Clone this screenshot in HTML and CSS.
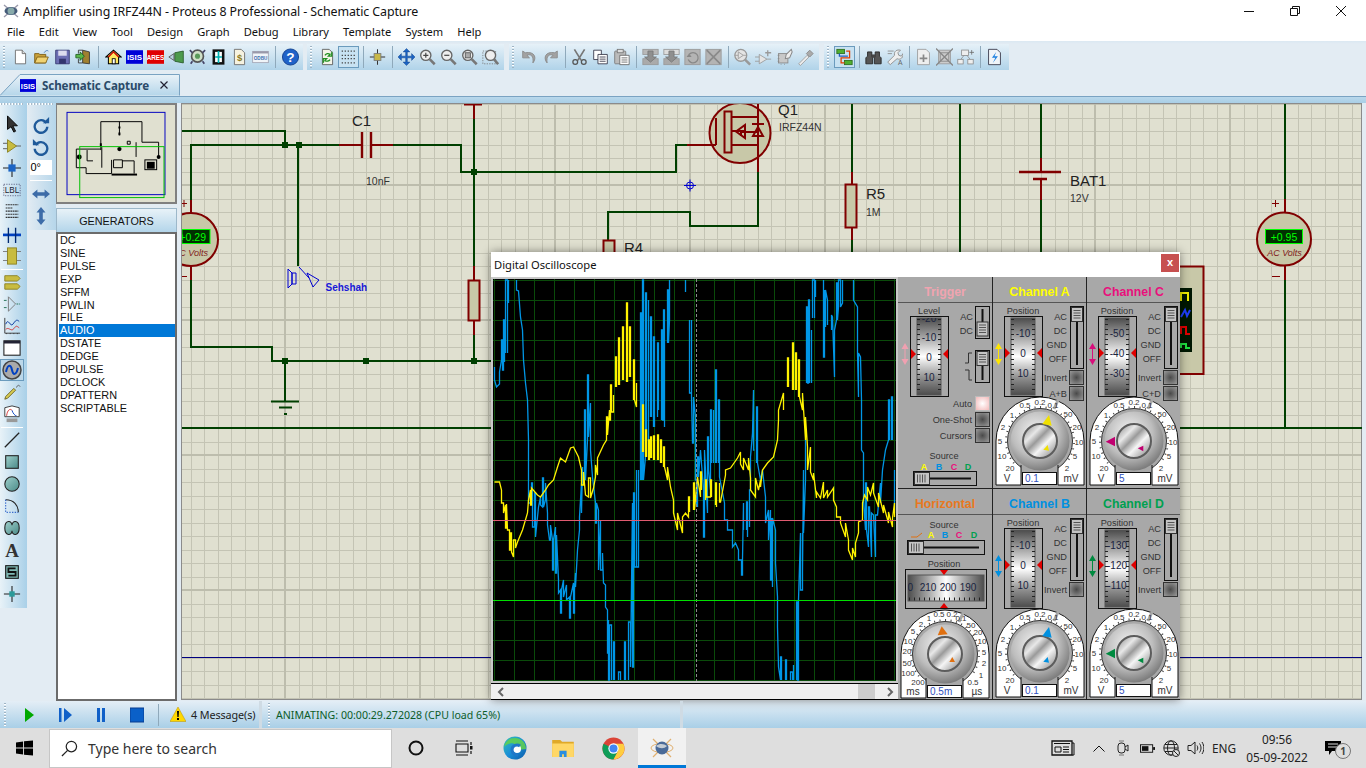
FILE: index.html
```html
<!DOCTYPE html>
<html lang="en">
<head>
<meta charset="utf-8">
<title>Amplifier using IRFZ44N - Proteus 8 Professional - Schematic Capture</title>
<link rel="stylesheet" href="styles.css">
</head>
<body>
<svg class="defs" width="0" height="0" aria-hidden="true">
<defs>
<linearGradient id="wheel" x1="0" y1="0" x2="0" y2="1"><stop offset="0" stop-color="#4c4c4c"/><stop offset=".22" stop-color="#9a9a9a"/><stop offset=".5" stop-color="#fff"/><stop offset=".78" stop-color="#8e8e8e"/><stop offset="1" stop-color="#4c4c4c"/></linearGradient>
<linearGradient id="hwheel" x1="0" y1="0" x2="1" y2="0"><stop offset="0" stop-color="#4c4c4c"/><stop offset=".25" stop-color="#a0a0a0"/><stop offset=".5" stop-color="#fff"/><stop offset=".75" stop-color="#a0a0a0"/><stop offset="1" stop-color="#4c4c4c"/></linearGradient>
<radialGradient id="knob" cx=".42" cy=".36" r=".72"><stop offset="0" stop-color="#f4f4f4"/><stop offset=".55" stop-color="#bdbdbd"/><stop offset="1" stop-color="#6a6a6a"/></radialGradient>
<linearGradient id="cap" x1="0" y1="0" x2="1" y2="1"><stop offset="0" stop-color="#7d7d7d"/><stop offset=".3" stop-color="#e8e8e8"/><stop offset=".45" stop-color="#9a9a9a"/><stop offset=".62" stop-color="#f5f5f5"/><stop offset="1" stop-color="#777"/></linearGradient>
<radialGradient id="btn" cx=".5" cy=".5" r=".7"><stop offset="0" stop-color="#4a4a4a"/><stop offset="1" stop-color="#a0a0a0"/></radialGradient>
<radialGradient id="btnp" cx=".5" cy=".5" r=".7"><stop offset="0" stop-color="#fff"/><stop offset="1" stop-color="#f2b4b4"/></radialGradient>
<linearGradient id="teal" x1="0" y1="0" x2="1" y2="1"><stop offset="0" stop-color="#9fd0cc"/><stop offset="1" stop-color="#4a8a88"/></linearGradient>
<linearGradient id="edge" x1="0" y1="0" x2="1" y2="1"><stop offset="0" stop-color="#35c1b0"/><stop offset=".5" stop-color="#1a8fd8"/><stop offset="1" stop-color="#0c5aa8"/></linearGradient>
<clipPath id="wclip"><rect x="19" y="15" width="24" height="77"/></clipPath>
<clipPath id="hclip"><rect x="10" y="60" width="76" height="26"/></clipPath>

<g id="thumb"><rect x="0" y="0" width="11" height="14" fill="#c4c4c4" stroke="#333"/><path d="M2 3h7M2 5.500h7M2 8h7M2 10.500h7" stroke="#555" stroke-width="1"/></g>
<g id="hthumb"><rect x="0" y="0" width="15" height="12" fill="#c4c4c4" stroke="#333"/><path d="M3 2v8M5.500 2v8M8 2v8M10.500 2v8" stroke="#555" stroke-width="1"/></g>
<g id="pb"><rect x=".5" y=".5" width="14" height="14" fill="url(#btn)" stroke="#333"/></g>
<g id="pbp"><rect x=".5" y=".5" width="14" height="14" fill="url(#btnp)" stroke="#bbb"/></g>

<g id="chstatic">
<text class="sc-l" x="30" y="10.500" text-anchor="middle">Position</text>
<rect x="11.500" y="13.500" width="38" height="80" fill="#a8a8a8" stroke="#111"/>
<rect x="18" y="15" width="24" height="77" fill="url(#wheel)" stroke="#555"/>
<path d="M19.500 16V91M40.500 16V91" stroke="#222" stroke-width="3" stroke-dasharray="1 4"/>
<polygon points="12,45 17,50 12,55" fill="#e00000"/><polygon points="49,45 44,50 49,55" fill="#e00000"/>
<text class="sc-l" x="74" y="17" text-anchor="end">AC</text><text class="sc-l" x="74" y="31" text-anchor="end">DC</text><text class="sc-l" x="74" y="45" text-anchor="end">GND</text><text class="sc-l" x="74" y="59" text-anchor="end">OFF</text>
<rect x="77.500" y="3.500" width="13" height="62" fill="#a8a8a8" stroke="#111"/><path d="M84 8V62" stroke="#111" stroke-width="2"/>
<use href="#thumb" x="78.500" y="4.500"/>
<text class="sc-l" x="74" y="77.500" text-anchor="end">Invert</text><use href="#pb" x="76" y="67"/>
</g>

<g id="dialbody">
<path d="M3 182V138A44 44 0 0 1 91 138V182Z" fill="#fff" stroke="#111"/>
<circle cx="47" cy="138" r="32.500" fill="#a8a8a8" stroke="#333"/>
<path d="M21 160A34 34 0 1 1 73 160" fill="none" stroke="#444" stroke-width="2" stroke-dasharray="1 4.500"/>
<path d="M66 95L61 106" stroke="#a8a8a8" stroke-width="3"/>
<rect x="28" y="160" width="37" height="23" fill="#a8a8a8"/>
<path d="M28 182V162M65 182V162" stroke="#111"/>
<circle cx="47" cy="138" r="29.500" fill="url(#knob)"/>
<circle cx="47" cy="138" r="17" fill="url(#cap)" stroke="#5c5c5c" stroke-width="2"/>
</g>

<g id="vdial"><use href="#dialbody"/>
<text class="sc-s" x="32" y="105">0.5</text><text class="sc-s" x="47" y="102">0.2</text><text class="sc-s" x="60" y="105">0.1</text><text class="sc-s" x="19" y="115">1</text><text class="sc-s" x="10" y="127">2</text><text class="sc-s" x="7" y="141">5</text><text class="sc-s" x="9" y="156">10</text><text class="sc-s" x="17" y="168">20</text><text class="sc-s" x="75" y="114">50</text><text class="sc-s" x="84" y="127">20</text><text class="sc-s" x="86" y="142">10</text><text class="sc-s" x="82" y="156">5</text><text class="sc-s" x="74" y="168">2</text>
<text class="sc-u" x="14" y="179">V</text><text class="sc-u" x="78" y="179">mV</text>
</g>
<g id="val"><rect x="29.500" y="169.500" width="34" height="12" fill="#fff" stroke="#111"/></g>

<symbol id="i-new" viewBox="0 0 20 20"><path d="M4 2h8l4 4v12H4z" fill="#fff" stroke="#666"/><path d="M12 2v4h4" fill="#ddd" stroke="#666"/></symbol>
<symbol id="i-open" viewBox="0 0 20 20"><path d="M2 6h5l1 1h7v10H2z" fill="#c9a13a" stroke="#7a5a10"/><path d="M2 17l3-7h13l-3 7z" fill="#f0d272" stroke="#7a5a10"/><path d="M13 5c2-3 4-3 5-2" fill="none" stroke="#3a6fb0"/></symbol>
<symbol id="i-save" viewBox="0 0 20 20"><path d="M2 2h16v16H2z" fill="#6d6fb4" stroke="#33356e"/><rect x="5" y="2.500" width="10" height="6" fill="#dcdcee"/><rect x="6" y="12" width="8" height="6" fill="#33356e"/></symbol>
<symbol id="i-exit" viewBox="0 0 20 20"><path d="M9 2l8 2v14l-8-1z" fill="#a08030" stroke="#333"/><path d="M9 2H4v4M4 12v5h5" fill="none" stroke="#333"/><path d="M1 7h5V4l5 5-5 5v-3H1z" fill="#58b848" stroke="#1c5c1c"/></symbol>
<symbol id="i-home" viewBox="0 0 20 20"><path d="M10 2l9 8h-3v8H4v-8H1z" fill="#ffe860" stroke="#000" stroke-width="1.200"/><path d="M4 10l6-6 6 6" fill="none" stroke="#c00" stroke-width="1.500"/><rect x="8.500" y="12" width="3.500" height="6" fill="#fff" stroke="#000"/></symbol>
<symbol id="i-isis" viewBox="0 0 20 16"><rect width="20" height="16" fill="#0000d8"/><text x="10" y="12" text-anchor="middle" fill="#fff" font-family="Liberation Sans" font-weight="700" font-size="9.500">ISIS</text></symbol>
<symbol id="i-ares" viewBox="0 0 20 16"><rect width="20" height="16" fill="#e00000"/><text x="10" y="12" text-anchor="middle" fill="#fff" font-family="Liberation Sans" font-weight="700" font-size="7.500">ARES</text></symbol>
<symbol id="i-3d" viewBox="0 0 20 20"><path d="M8 5l10-2v14l-10-2z" fill="#4c9a4c" stroke="#285828"/><path d="M1 10l6-4v8z" fill="#b8d0e0" stroke="#555"/></symbol>
<symbol id="i-gear" viewBox="0 0 20 20"><circle cx="10" cy="9" r="7" fill="#d0e0c8" stroke="#555" stroke-width="2"/><circle cx="10" cy="9" r="3" fill="#5a9a5a"/><path d="M1 2l3 3M19 2l-3 3M4 15l-2 3M16 15l2 3" stroke="#446" stroke-width="2"/></symbol>
<symbol id="i-chip" viewBox="0 0 20 20"><path d="M3 1h14v18H3z" fill="#111"/><rect x="6" y="4" width="8" height="12" fill="#fff"/><path d="M10 3v14M6 10h8" stroke="#00b0b0" stroke-width="2"/></symbol>
<symbol id="i-bill" viewBox="0 0 20 20"><path d="M4 1h8l4 4v14H4z" fill="#f6f2e0" stroke="#666"/><text x="10" y="15" text-anchor="middle" fill="#8a7a20" font-family="Liberation Sans" font-weight="700" font-size="11">$</text></symbol>
<symbol id="i-odb" viewBox="0 0 24 20"><rect x="1" y="2" width="22" height="16" fill="#f0f4f8" stroke="#99a"/><rect x="1" y="2" width="22" height="3" fill="#99a"/><text x="12" y="14" text-anchor="middle" fill="#3a6fb0" font-family="Liberation Sans" font-weight="700" font-size="6.500">ODBU</text></symbol>
<symbol id="i-help" viewBox="0 0 20 20"><circle cx="10" cy="10" r="9.500" fill="#1f62c8" stroke="#0c3a86"/><text x="10" y="16" text-anchor="middle" fill="#fff" font-family="Liberation Sans" font-weight="700" font-size="16">?</text></symbol>
<symbol id="i-refresh" viewBox="0 0 20 20"><path d="M4 1h8l4 4v14H4z" fill="#f4f4e8" stroke="#555"/><path d="M7 8a4 4 0 0 1 6-1l-2 2h4V5l-1 1M13 13a4 4 0 0 1-6 1l2-2H5v4l1-1" fill="none" stroke="#209020" stroke-width="1.500"/></symbol>
<symbol id="i-grid" viewBox="0 0 20 20"><path d="M2 3h16M2 8h16M2 12h16M2 17h16" stroke="#444" stroke-width="1.500" stroke-dasharray="1.500 2"/></symbol>
<symbol id="i-origin" viewBox="0 0 20 20"><path d="M10 1v18M1 10h18" stroke="#333" stroke-width="1.200"/><rect x="6" y="6" width="8" height="8" fill="#c8b848" stroke="#777"/></symbol>
<symbol id="i-pan" viewBox="0 0 20 20"><path d="M10 0l4 4h-3v5h5V6l4 4-4 4v-3h-5v5h3l-4 4-4-4h3v-5H4v3l-4-4 4-4v3h5V4H6z" fill="#1c64c4" stroke="#0a3a80" stroke-width=".5"/></symbol>
<symbol id="i-zin" viewBox="0 0 20 20"><circle cx="8" cy="8" r="6" fill="#eee" stroke="#666" stroke-width="1.600"/><path d="M5 8h6M8 5v6" stroke="#444" stroke-width="1.400"/><path d="M12.500 12.500l6 6" stroke="#777" stroke-width="3"/></symbol>
<symbol id="i-zout" viewBox="0 0 20 20"><circle cx="8" cy="8" r="6" fill="#eee" stroke="#666" stroke-width="1.600"/><path d="M5 8h6" stroke="#444" stroke-width="1.400"/><path d="M12.500 12.500l6 6" stroke="#777" stroke-width="3"/></symbol>
<symbol id="i-zfit" viewBox="0 0 20 20"><circle cx="8" cy="8" r="6" fill="#eee" stroke="#666" stroke-width="1.600"/><rect x="5" y="5" width="6" height="6" fill="#aaa" stroke="#555"/><path d="M12.500 12.500l6 6" stroke="#777" stroke-width="3"/></symbol>
<symbol id="i-zarea" viewBox="0 0 20 20"><rect x="1" y="3" width="15" height="15" fill="none" stroke="#777" stroke-dasharray="1.500 1.500"/><circle cx="10" cy="8" r="6" fill="#eee" stroke="#666" stroke-width="1.600"/><path d="M14 12.500l5 6" stroke="#777" stroke-width="3"/></symbol>
<symbol id="i-undo" viewBox="0 0 20 20"><path d="M2 3v8h8l-3-3c5-2 8 1 7 9 5-6 2-14-9-12z" fill="#a2a2a2" stroke="#888"/></symbol>
<symbol id="i-redo" viewBox="0 0 20 20"><path d="M18 3v8h-8l3-3c-5-2-8 1-7 9-5-6-2-14 9-12z" fill="#a2a2a2" stroke="#888"/></symbol>
<symbol id="i-cut" viewBox="0 0 20 20"><path d="M4 1l8 13M16 1L8 14" stroke="#777" stroke-width="2"/><circle cx="5" cy="16" r="2.800" fill="none" stroke="#555" stroke-width="1.500"/><circle cx="15" cy="16" r="2.800" fill="none" stroke="#555" stroke-width="1.500"/></symbol>
<symbol id="i-copy" viewBox="0 0 20 20"><path d="M2 2h9v11H2z" fill="#fff" stroke="#334"/><path d="M7 7h11v11H7z" fill="#fff" stroke="#334"/><path d="M9 10h7M9 12.500h7M9 15h7" stroke="#334"/></symbol>
<symbol id="i-paste" viewBox="0 0 20 20"><rect x="2" y="3" width="13" height="15" fill="#bbb" stroke="#777" rx="1"/><rect x="5" y="1" width="7" height="4" fill="#ddd" stroke="#777"/><path d="M8 8h11v11H8z" fill="#fff" stroke="#666"/><path d="M10 11h7M10 13.500h7M10 16h7" stroke="#666"/></symbol>
<symbol id="i-bcopy" viewBox="0 0 20 20"><rect x="1" y="1" width="18" height="6" fill="#b8b8b8" stroke="#999"/><rect x="1" y="12" width="18" height="7" fill="#aaa" stroke="#999"/><path d="M7 3h6v7h4l-7 6-7-6h4z" fill="#8f8f8f" stroke="#777"/></symbol>
<symbol id="i-bmove" viewBox="0 0 20 20"><rect x="1" y="1" width="18" height="6" fill="#ddd" stroke="#999"/><rect x="1" y="12" width="18" height="7" fill="#aaa" stroke="#999"/><path d="M7 3h6v7h4l-7 6-7-6h4z" fill="#8f8f8f" stroke="#777"/></symbol>
<symbol id="i-brot" viewBox="0 0 20 20"><rect x="1" y="1" width="18" height="18" fill="#b4b4b4" stroke="#999"/><path d="M6 7a6 6 0 1 1-1 6" fill="none" stroke="#888" stroke-width="1.500"/><path d="M3 10h6l-3-4z" fill="#888"/></symbol>
<symbol id="i-bdel" viewBox="0 0 20 20"><rect x="1" y="1" width="18" height="18" fill="#b4b4b4" stroke="#999"/><path d="M2 2l16 16M18 2L2 18" stroke="#8a8a8a" stroke-width="2"/></symbol>
<symbol id="i-pick" viewBox="0 0 20 20"><circle cx="8" cy="8" r="7" fill="#e4e4e4" stroke="#999" stroke-width="1.500"/><path d="M5 4v8l6-4zM1 8h4M11 8h4" fill="none" stroke="#999"/><path d="M13 13l6 6" stroke="#999" stroke-width="3"/></symbol>
<symbol id="i-make" viewBox="0 0 20 20"><path d="M5 7v11l9-5.500zM0 10h5M0 15h5M14 12.500h5" fill="#e4e4e4" stroke="#999"/><path d="M15 2v7M12 5h7" stroke="#999" stroke-width="1.500"/></symbol>
<symbol id="i-pack" viewBox="0 0 20 20"><rect x="3" y="6" width="11" height="11" fill="#c8c8c8" stroke="#888"/><path d="M2 8h2M2 12h2M2 15h2M6 18v1M10 18v1" stroke="#888"/><path d="M18 1l-6 6-1 5 5-1 3-7z" fill="#eee" stroke="#888" stroke-width="1.200"/></symbol>
<symbol id="i-hammer" viewBox="0 0 20 20"><path d="M2 18l10-10 2 2-10 10z" fill="#eee" stroke="#999"/><path d="M11 6l4-4 4 4-4 4z" fill="#aaa" stroke="#888"/></symbol>
<symbol id="i-net" viewBox="0 0 20 20"><rect x="1" y="1" width="9" height="5" fill="#50b030" stroke="#2c6c1c"/><rect x="10" y="14" width="9" height="5" fill="#50b030" stroke="#2c6c1c"/><path d="M12 3h4v8H6v6h4" fill="none" stroke="#e04000" stroke-width="1.500"/><path d="M4 6v3h10" fill="none" stroke="#2060c0" stroke-width="1.500"/></symbol>
<symbol id="i-find" viewBox="0 0 20 20"><path d="M3 4h5v5l1 2v7H1v-7l2-2zM12 4h5v5l2 2v7h-8v-7l1-2z" fill="#555" stroke="#222"/><rect x="8" y="7" width="4" height="4" fill="#444"/></symbol>
<symbol id="i-wire" viewBox="0 0 20 20"><path d="M2 3h7M2 6h5" stroke="#888"/><path d="M2 16l8-8c-1-5 3-7 7-6l-3 3 1 3 3 1 2-3c1 4-3 8-7 6l-8 7z" fill="#eee" stroke="#888"/><text x="14" y="19" font-family="Liberation Sans" font-size="8" fill="#666">A</text></symbol>
<symbol id="i-nsheet" viewBox="0 0 20 20"><path d="M3 1h10l4 4v14H3z" fill="#eee" stroke="#999"/><path d="M10 7v9M5.500 11.500h9" stroke="#888" stroke-width="2"/></symbol>
<symbol id="i-dsheet" viewBox="0 0 20 20"><path d="M3 2h14v16H3z" fill="#ccc" stroke="#999"/><path d="M5 5h10v10H5z" fill="none" stroke="#888"/><path d="M0 0l20 20M20 0L0 20" stroke="#888" stroke-width="1.600"/></symbol>
<symbol id="i-parent" viewBox="0 0 22 20"><rect x="6" y="1" width="9" height="7" fill="#eee" stroke="#888"/><rect x="1" y="13" width="7" height="6" fill="#eee" stroke="#888"/><rect x="14" y="13" width="7" height="6" fill="#eee" stroke="#888"/><path d="M9 8l-4 5M13 8l4 5" stroke="#888"/><path d="M19 1v6M16 4h6" stroke="#666"/></symbol>
<symbol id="i-report" viewBox="0 0 20 20"><path d="M3 1h10l4 4v14H3z" fill="#f0f4f8" stroke="#334"/><path d="M12 4l-5 7h4l-3 6 6-8h-4z" fill="#1c80e0"/></symbol>

<symbol id="t-sel" viewBox="0 0 20 20"><path d="M5 1v15l4-3 3 6 2-1-3-6h5z" fill="#333" stroke="#000"/></symbol>
<symbol id="t-comp" viewBox="0 0 20 20"><path d="M0 7h5M0 13h5M14 10h6" stroke="#555"/><path d="M5 3v14l10-7z" fill="#c8bc40" stroke="#8a8020"/></symbol>
<symbol id="t-junc" viewBox="0 0 20 20"><path d="M10 0v20M0 10h20" stroke="#222" stroke-width="1.200"/><rect x="6" y="6" width="8" height="8" fill="#1c64c4"/></symbol>
<symbol id="t-lbl" viewBox="0 0 22 20"><rect x="1" y="3" width="20" height="14" fill="none" stroke="#557" stroke-dasharray="1.500 1.500"/><text x="11" y="14" text-anchor="middle" font-family="Liberation Sans" font-size="10" fill="#223">LBL</text></symbol>
<symbol id="t-text" viewBox="0 0 20 20"><path d="M3 2h14M3 5.500h8M3 9h14M3 12.500h14M3 16h14" stroke="#333" stroke-dasharray="2 .6" stroke-width="1.200"/></symbol>
<symbol id="t-bus" viewBox="0 0 20 20"><path d="M0 11h20" stroke="#0040c0" stroke-width="3"/><path d="M6 3v17M14 3v17" stroke="#002870" stroke-width="1.500"/></symbol>
<symbol id="t-sub" viewBox="0 0 20 20"><path d="M0 5h6M0 15h6M14 5h6M14 15h6" stroke="#777"/><rect x="5" y="1" width="10" height="18" fill="#c8bc40" stroke="#8a8020"/></symbol>
<symbol id="t-term" viewBox="0 0 20 20"><path d="M2 3h14l3 3-3 3H2z" fill="#c8bc40" stroke="#8a8020"/><path d="M2 11h14l3 3-3 3H2z" transform="translate(0 1)" fill="#c8bc40" stroke="#8a8020"/></symbol>
<symbol id="t-port" viewBox="0 0 20 20"><path d="M6 2v16l8-8z" fill="none" stroke="#777"/><path d="M1 6h3M1 14h3" stroke="#1a6a4a"/><path d="M15 10h4" stroke="#1a6a4a" stroke-dasharray="2 1"/></symbol>
<symbol id="t-graph" viewBox="0 0 20 20"><path d="M2 1v17h17" fill="none" stroke="#333"/><path d="M3 8c3-8 5 4 8 0s4-6 7-3" fill="none" stroke="#00309a"/><path d="M3 14c3-4 6 3 9-1s3-3 6-1" fill="none" stroke="#d03030"/><path d="M4 18v1M8 18v1M12 18v1M16 18v1" stroke="#333"/></symbol>
<symbol id="t-tape" viewBox="0 0 20 20"><rect x="1" y="2" width="18" height="16" fill="#fff" stroke="#222" stroke-width="1.200"/><rect x="1" y="2" width="18" height="3" fill="#223"/></symbol>
<symbol id="t-gen" viewBox="0 0 20 20"><circle cx="10" cy="10" r="9" fill="#aaa" stroke="#444" stroke-width="1.500"/><path d="M4 12c2-9 5-7 6-2s4 6 6-2" fill="none" stroke="#0040c0" stroke-width="2"/></symbol>
<symbol id="t-probe" viewBox="0 0 20 20"><path d="M2 18l3-1 9-9-2-2-9 9z" fill="#d8cc50" stroke="#6a6020"/><path d="M15 5c1-3 3-3 4-1" fill="none" stroke="#555"/></symbol>
<symbol id="t-inst" viewBox="0 0 20 20"><path d="M2 3l8-2 8 2v10H2z" fill="#fff" stroke="#333"/><path d="M4 12c1-8 5-8 6-6" fill="none" stroke="#d03030"/><path d="M10 6c1 3 3 6 5 6" fill="none" stroke="#0040c0"/><path d="M4 15h12v4H4z" fill="#999"/></symbol>
<symbol id="t-line" viewBox="0 0 20 20"><path d="M2 18L18 2" stroke="#222" stroke-width="1.400"/></symbol>
<symbol id="t-rect" viewBox="0 0 20 20"><rect x="3" y="3" width="14" height="14" fill="url(#teal)" stroke="#222" stroke-width="1.200"/></symbol>
<symbol id="t-circ" viewBox="0 0 20 20"><circle cx="10" cy="10" r="8" fill="url(#teal)" stroke="#222" stroke-width="1.200"/></symbol>
<symbol id="t-arc" viewBox="0 0 20 20"><path d="M3 3c9 0 14 6 14 14" fill="none" stroke="#222" stroke-width="1.200"/><path d="M3 3v14h14" fill="none" stroke="#0040c0" stroke-dasharray="1.500 1.500"/></symbol>
<symbol id="t-path" viewBox="0 0 20 20"><path d="M2 10c0-9 8-9 8-3 0-6 8-6 8 3s-8 9-8 3c0 6-8 6-8-3z" fill="url(#teal)" stroke="#222" stroke-width="1.200"/></symbol>
<symbol id="t-a" viewBox="0 0 20 20"><text x="10" y="18" text-anchor="middle" font-family="Liberation Serif" font-weight="700" font-size="21" fill="#333">A</text></symbol>
<symbol id="t-s" viewBox="0 0 20 20"><rect x="3" y="3" width="14" height="14" fill="#7fb8b4" stroke="#111" stroke-width="1.200"/><path d="M14 6H6v4h8v4H6" fill="none" stroke="#111" stroke-width="2"/></symbol>
<symbol id="t-mark" viewBox="0 0 20 20"><path d="M10 1v18M1 10h18" stroke="#222" stroke-width="1.200"/><rect x="7" y="7" width="6" height="6" fill="#2a9a9a"/></symbol>
<symbol id="t-redo" viewBox="0 0 20 20"><path d="M16 8a7 7 0 1 0 1 4" fill="none" stroke="#1f5a9a" stroke-width="2.600"/><path d="M12 8h7V1z" fill="#1f5a9a"/></symbol>
<symbol id="t-undo" viewBox="0 0 20 20"><path d="M4 8a7 7 0 1 1-1 4" fill="none" stroke="#1f5a9a" stroke-width="2.600"/><path d="M8 8H1V1z" fill="#1f5a9a"/></symbol>
<symbol id="t-mh" viewBox="0 0 20 20"><path d="M0 10l6-5v3h8V5l6 5-6 5v-3H6v3z" fill="#3d6ca8"/></symbol>
<symbol id="t-mv" viewBox="0 0 20 20"><path d="M10 0l5 6h-3v8h3l-5 6-5-6h3V6H5z" fill="#3d6ca8"/></symbol>
</defs>
</svg>

<header class="titlebar">
<svg class="appicon" viewBox="0 0 16 16"><path d="M1 2l14 12M15 2L1 14" stroke="#99a" stroke-width="1.400"/><ellipse cx="8" cy="8" rx="6.500" ry="4" fill="#445a78"/><circle cx="8" cy="8" r="3.500" fill="#8aa"/></svg>
<span class="titletext">Amplifier using IRFZ44N - Proteus 8 Professional - Schematic Capture</span>
<span class="winbtns">
<span class="wb"><svg viewBox="0 0 10 10" width="10" height="10"><path d="M0 5.500h10" stroke="#111"/></svg></span>
<span class="wb"><svg viewBox="0 0 10 10" width="10" height="10"><path d="M.5 2.500h7v7h-7zM2.500 2.500v-2h7v7h-2" fill="none" stroke="#111"/></svg></span>
<span class="wb"><svg viewBox="0 0 10 10" width="10" height="10"><path d="M0 0l10 10M10 0L0 10" stroke="#111"/></svg></span>
</span>
</header>

<nav class="menubar"><span>File</span><span>Edit</span><span>View</span><span>Tool</span><span>Design</span><span>Graph</span><span>Debug</span><span>Library</span><span>Template</span><span>System</span><span>Help</span></nav>

<div class="toolbar">
<div class="tg g1"><i class="grip"></i>
<svg class="ic"><use href="#i-new"/></svg><svg class="ic"><use href="#i-open"/></svg><svg class="ic"><use href="#i-save"/></svg><svg class="ic"><use href="#i-exit"/></svg><i class="sep"></i>
<svg class="ic"><use href="#i-home"/></svg><svg class="ic"><use href="#i-isis"/></svg><svg class="ic"><use href="#i-ares"/></svg><svg class="ic"><use href="#i-3d"/></svg><svg class="ic"><use href="#i-gear"/></svg><svg class="ic"><use href="#i-chip"/></svg><svg class="ic"><use href="#i-bill"/></svg><svg class="ic"><use href="#i-odb"/></svg><i class="sep"></i>
<svg class="ic"><use href="#i-help"/></svg></div>
<div class="tg g2"><i class="grip"></i>
<svg class="ic"><use href="#i-refresh"/></svg><svg class="ic on"><use href="#i-grid"/></svg><i class="sep"></i>
<svg class="ic"><use href="#i-origin"/></svg><i class="sep"></i>
<svg class="ic"><use href="#i-pan"/></svg><svg class="ic"><use href="#i-zin"/></svg><svg class="ic"><use href="#i-zout"/></svg><svg class="ic"><use href="#i-zfit"/></svg><svg class="ic"><use href="#i-zarea"/></svg></div>
<div class="tg g3"><i class="grip"></i>
<svg class="ic"><use href="#i-undo"/></svg><svg class="ic"><use href="#i-redo"/></svg><i class="sep"></i>
<svg class="ic"><use href="#i-cut"/></svg><svg class="ic"><use href="#i-copy"/></svg><svg class="ic"><use href="#i-paste"/></svg><i class="sep"></i>
<svg class="ic"><use href="#i-bcopy"/></svg><svg class="ic"><use href="#i-bmove"/></svg><svg class="ic"><use href="#i-brot"/></svg><svg class="ic"><use href="#i-bdel"/></svg><i class="sep"></i>
<svg class="ic"><use href="#i-pick"/></svg><svg class="ic"><use href="#i-make"/></svg><svg class="ic"><use href="#i-pack"/></svg><svg class="ic"><use href="#i-hammer"/></svg></div>
<div class="tg g4"><i class="grip"></i>
<svg class="ic on"><use href="#i-net"/></svg><i class="sep"></i>
<svg class="ic"><use href="#i-find"/></svg><svg class="ic"><use href="#i-wire"/></svg><i class="sep"></i>
<svg class="ic"><use href="#i-nsheet"/></svg><svg class="ic"><use href="#i-dsheet"/></svg><svg class="ic"><use href="#i-parent"/></svg><i class="sep"></i>
<svg class="ic"><use href="#i-report"/></svg></div>
</div>

<div class="tabrow">
<div class="tab">
<svg class="tabshape" viewBox="0 0 180 26" preserveAspectRatio="none"><defs><linearGradient id="tabg" x1="0" y1="0" x2="0" y2="1"><stop offset="0" stop-color="#e9f2f8"/><stop offset="1" stop-color="#b5d6ea"/></linearGradient></defs><path d="M0 25.500L20 4.500H179.500V25.500" fill="url(#tabg)" stroke="#7aa3c2"/></svg>
<svg class="tabicon"><use href="#i-isis"/></svg><span class="tablabel">Schematic Capture</span>
<svg class="tabx" viewBox="0 0 8 8"><path d="M.5.500l7 7M7.500.500l-7 7" stroke="#223" stroke-width="1.200"/></svg>
</div>
</div>
<div class="tabstrip"></div>

<main class="workspace">
<div class="tools">
<i class="gripx"></i>
<svg class="tic"><use href="#t-sel"/></svg><svg class="tic"><use href="#t-comp"/></svg><svg class="tic"><use href="#t-junc"/></svg><svg class="tic"><use href="#t-lbl"/></svg><svg class="tic"><use href="#t-text"/></svg><svg class="tic"><use href="#t-bus"/></svg><svg class="tic"><use href="#t-sub"/></svg>
<i class="hr"></i>
<svg class="tic"><use href="#t-term"/></svg><svg class="tic"><use href="#t-port"/></svg><svg class="tic"><use href="#t-graph"/></svg><svg class="tic"><use href="#t-tape"/></svg><svg class="tic on"><use href="#t-gen"/></svg><svg class="tic"><use href="#t-probe"/></svg><svg class="tic"><use href="#t-inst"/></svg>
<i class="hr"></i>
<svg class="tic"><use href="#t-line"/></svg><svg class="tic"><use href="#t-rect"/></svg><svg class="tic"><use href="#t-circ"/></svg><svg class="tic"><use href="#t-arc"/></svg><svg class="tic"><use href="#t-path"/></svg><svg class="tic"><use href="#t-a"/></svg><svg class="tic"><use href="#t-s"/></svg><svg class="tic"><use href="#t-mark"/></svg>
</div>
<div class="tools2">
<i class="gripx"></i>
<svg class="tic"><use href="#t-redo"/></svg><svg class="tic"><use href="#t-undo"/></svg>
<span class="angle">0°</span><i class="hr"></i>
<svg class="tic"><use href="#t-mh"/></svg><svg class="tic"><use href="#t-mv"/></svg>
</div>
<aside class="side">
<div class="overview">
<svg viewBox="57 104 119 99" class="ov">
<rect x="66.500" y="111.500" width="100" height="84" fill="none" stroke="#0000c0"/>
<g fill="none" stroke="#000" stroke-width="1">
<path d="M101 150V121H143V142H160V158M120 121V135M76 149H101M76 149V168H86V174H112V160M102 147V168M87 150V161H93M114 160H123V168H114ZM123 161H135V174M137 142V157"/>
<path d="M112 175H138" stroke-width="2"/><path d="M131 141h-3v3h3z"/><path d="M120 126v2M120 132v3M101 143v3" stroke-width="2"/>
<rect x="146" y="160" width="12" height="10"/>
</g>
<rect x="148" y="162" width="8" height="7"/>
<circle cx="79" cy="157" r="2.500"/><circle cx="120" cy="149" r="2.200"/><circle cx="160" cy="157" r="2"/>
<rect x="79.500" y="146.500" width="86" height="52" fill="none" stroke="#00c000"/>
</svg>
</div>
<div class="genhead">GENERATORS</div>
<ul class="genlist"><li>DC</li><li>SINE</li><li>PULSE</li><li>EXP</li><li>SFFM</li><li>PWLIN</li><li>FILE</li><li class="sel">AUDIO</li><li>DSTATE</li><li>DEDGE</li><li>DPULSE</li><li>DCLOCK</li><li>DPATTERN</li><li>SCRIPTABLE</li></ul>
</aside>

<section class="canvas">
<svg class="schem" viewBox="182 104 1180 595">
<g class="wire">
<path d="M182 131H285V145"/><path d="M191 200V145H340"/><path d="M393 145H461V172H676V145H687"/>
<path d="M474 119V266M474 335V361"/><path d="M191 280V347H272V361H491"/><path d="M298 145V266"/>
<path d="M285 361V401"/><path d="M271 401.500H299M279 407.500H292M284 414H287"/>
<path d="M182 428H491M1180 428H1362"/><path d="M758 172V226H690V212H608V240"/>
<path d="M852 104V172M852 240V252"/><path d="M960 104V252"/><path d="M1041 104V158M1041 200V252"/><path d="M1285 104V199M1285 280V428"/>
</g>
<g class="node"><rect x="282" y="142" width="6" height="6"/><rect x="296" y="142" width="6" height="6"/><rect x="471" y="169" width="6" height="6"/><rect x="282" y="358" width="6" height="6"/><rect x="363" y="358" width="6" height="6"/><rect x="471" y="358" width="6" height="6"/></g>
<path class="navy" d="M182 657.500H491M1180 657.500H1362"/>
<g class="part">
<path d="M464 104.500H482M474 104V119M474 266V280M474 320V335"/><rect x="468.500" y="280.500" width="11" height="40" class="body"/>
<path d="M339 145H361M372 145H393"/><path class="thick" d="M362 132V158M371 132V158"/>
<ellipse cx="191" cy="239.500" rx="27" ry="26.500" class="body"/><path d="M191 200V213M191 266V280"/>
<path d="M608 240V253"/>
<rect x="603.500" y="240.500" width="11" height="30" class="body"/>
<ellipse cx="740" cy="133" rx="30.500" ry="30" class="body"/>
<path d="M687 145H716M716 118V145"/><rect x="724.500" y="111.500" width="7" height="41" fill="none"/>
<path d="M731 117H758M731 145H758M758 104V172M741 136V132H758M731 131H745M745 125V138L736 131.500Z"/>
<path d="M752 124H764M753 136H763L758 127Z"/>
<path d="M852 172V185M852 227V240"/><rect x="845.500" y="184.500" width="11" height="43" class="body"/>
<path d="M1041 158V172M1041 179V200"/><path class="thick" d="M1019 172H1061M1033 179H1047"/>
<ellipse cx="1284" cy="239" rx="27" ry="26.500" class="body"/><path d="M1285 199V212M1285 266V280"/>
<path class="thin" d="M1272 203.500H1279M1275.500 200V207M1272 276.500H1280M181 203.500H187M184 200V207M181 276.500H187"/>
</g>
<rect x="1180" y="267" width="23" height="107" fill="#c8c8a8"/>
<path d="M1180 266.500H1203.500V374H1180" fill="none" stroke="#800000" stroke-width="2"/>
<rect x="1180" y="288" width="12" height="64" fill="#001800"/>
<path d="M1181 301V293H1188V301" fill="none" stroke="#f0f000" stroke-width="2"/><path d="M1181 317L1185 310L1187 316L1190 310" fill="none" stroke="#2040ff" stroke-width="2"/><path d="M1181 334V327H1186V334H1190" fill="none" stroke="#e00000" stroke-width="2"/><path d="M1181 348V344H1186V348H1190" fill="none" stroke="#20e040" stroke-width="2"/>
<rect x="182" y="229.500" width="28" height="14" fill="#003000" stroke="#00ff00"/><text class="disp" x="206" y="240.500" text-anchor="end">+0.29</text>
<rect x="1265.500" y="229.500" width="37" height="14" fill="#003000" stroke="#00ff00"/><text class="disp" x="1284" y="240.500" text-anchor="middle">+0.95</text>
<text class="volts" x="208" y="256" text-anchor="end">AC Volts</text><text class="volts" x="1284.500" y="256" text-anchor="middle">AC Volts</text>
<text class="ref" x="352" y="126">C1</text><text class="val" x="366" y="185">10nF</text>
<text class="ref" x="778" y="115">Q1</text><text class="val" x="779" y="131">IRFZ44N</text>
<text class="ref" x="866" y="199">R5</text><text class="val" x="866" y="216">1M</text>
<text class="ref" x="1070" y="186">BAT1</text><text class="val" x="1070" y="202">12V</text>
<text class="ref" x="624" y="253">R4</text>
<g class="probe"><path d="M288 269L292 273V284L288 288ZM292 273H296V284H292ZM307 273L319 280L313 287ZM299 267L309 278"/><text x="325.500" y="291">Sehshah</text></g>
<g class="cross"><circle cx="690" cy="185.500" r="3.500"/><path d="M684 185.500H696M690 179.500V191.500"/></g>
</svg>

<div class="scopewin">
<div class="scopetitle"><span>Digital Oscilloscope</span><span class="scopeclose">x</span></div>
<div class="scopebody">
<div class="scopeleft">
<svg class="screen" viewBox="493 279 403 402">
<rect x="493" y="279" width="403" height="402" fill="#000"/>
<path class="grid" d="M514.500 279V681M534.500 279V681M554.500 279V681M574.500 279V681M594.500 279V681M614.500 279V681M634.500 279V681M654.500 279V681M674.500 279V681M694.500 279V681M714.500 279V681M734.500 279V681M754.500 279V681M774.500 279V681M794.500 279V681M814.500 279V681M834.500 279V681M854.500 279V681M874.500 279V681M894.500 279V681M493 280.500H896M493 300.500H896M493 320.500H896M493 340.500H896M493 360.500H896M493 380.500H896M493 400.500H896M493 420.500H896M493 440.500H896M493 460.500H896M493 480.500H896M493 500.500H896M493 520.500H896M493 540.500H896M493 560.500H896M493 580.500H896M493 600.500H896M493 620.500H896M493 640.500H896M493 660.500H896M493 680.500H896M494.500 279V681"/>
<path class="blue" d="M494 367V380L496 387L499 384V372L501 360V340H502V370H503V320H504V362M505 353V280H507V353M508 280V303M516 280V290L518 291L520 317L522 330L523 360L525 383L527 400L528 440V503H531V483H532V527H534V493H535V537L538 507L540 497V505L542 507V478H543V507L545 500V483L547 513V525L549 540H550V525L552 540V570H553V540L555 527V573H556V535L558 580V593L560 590V613H561V590L563 580V597L566 585V600L569 597V618H570V597L573 583V613H574V590L575 573V587L577 550L579 530V517L581 483V513L582 467V480H584V410H585V480L587 440V375H588V437L590 403V450L592 477L595 503V523H596V503L598 510V570L600 520V570H602V553L603 583L605 585V607L607 610V653H608V620V680H609V625H611V680M613 680V642H614V680M618 680V672H620V680M624 680V642H625V680M628 680V622H630V667L632 503V667H633V493H634V567H636V470V567H638V470V488M640 480V313H641V480M642 480V280H643V480L645 457V293H646V457M648 440V300M650 417V317H651V417M653 427V337H654V427M657 417V343H658V410M661 420V330H662V420H663V310H664V427M667 343V290H668V343L669 320V280M685 280V292M689 320V393H691V320V397L692 443H693V397L695 417V480H696V507M697 507V457H698V477L700 450L703 490V537H704V450L707 513V437H708V470L710 490V410H711V463M713 463V410M715 463V370H716V463M718 463V400H719V477L724 503V520L727 520V530L732 530V547L735 543L738 550V560L741 560V575H742V560L743 503V530M746 530V502H747V537M749 527V490H750V457L752 433L753 390V450H754M756 463V407H757V463L760 480L762 470L765 497V523L768 510V540L770 510V580H771V518L772 587V518L775 530V563L777 597V627L778 667L780 680V657H781V680M785 680V660H786V680M790 680V672H792V680M793 680V665M796 680V602H797V680H798V600L800 533V590H802V533V573L803 470V533L805 480V440M806 383V307H807V383H808V300H809V383M811 383V330M812 318V280H814V318M815 297V280M823 280V357H824V290M825 327V290L827 300V325M831 330V315L832 317L834 377V330L836 320V283H837V320L838 307V280H840V307L842 303V280M853 280V300L857 307V353L858 397V353L860 357L861 400V450L863 453V500L865 530V483H866V530L868 547V507H869L871 557V513L873 515L875 557V515L877 515L880 483V503L882 470L885 450L888 440V400H889V440M891 440V397H892V440M894 513V470"/>
<path class="yellow" d="M494 482H499L501 490V503H503V513L505 505V528H506V504L507 530H509V550H510V533H511V552L513 557V540H515V548L517 542L522 530L527 513L528 500L530 490V505H531V488L537 495L540 497L545 490L548 485L553 480L557 467L560 458L565 462L570 448L573 447L578 457L581 470V485H583V472L585 495L588 497V478H590V498L593 488L595 477V465L597 475V458L603 445L606 440V417H607V435L609 410V420H610V385H611V412H613V395M615 387V357H616V387M618 385V338H619V385M622 380V327H623V380M626 382V303H627V382M629 377V327H630V377M633 400V360H634V400L636 407V383M642 452V405H643V452M645 457V430H646V457M648 460V440H649V460M650 458V437H651V458M653 460V436H654V460M657 460V435H658V460M660 463V440H661V463M663 467V447H664V467L667 480V467L670 487L673 500V513L677 530V513L682 533V517L685 513L688 517V497H689V512M693 510V483H694V510L697 477L700 497V472H701V490M705 500V480H706V497L710 497V480H711V497M715 505V483H716V507M719 483V502H720L725 475V470L730 468L737 458L740 452V464L743 470V458L748 470V458L750 478V490L755 497V478L758 490L760 480V487L762 470L767 463L773 457L777 440L778 420V410L783 393V410M787 387V358H788V387M792 390V343H793V390M795 390V353H796V390M798 397V360H799V397L802 410V393L805 440V417L807 447V470L810 447V472L813 480V473L816 498V492L820 498L823 482V498L827 490V497L833 488V500L836 507V517L840 517V523L845 537V523L848 540V550L852 560V548L855 557V543L858 533V522L862 520V503L864 495L867 500V487L870 495L873 483V493L878 507V493L883 513V505L888 523V512L892 527V518L894 503V517"/>
<path class="cursor" d="M696.500 279V681"/>
<path class="redline" d="M493 520.500H896"/><path class="greenline" d="M493 600.500H896"/>
</svg>
<div class="scopescroll"><svg class="sa" viewBox="0 0 8 10"><path d="M6 1L2 5l4 4" fill="none" stroke="#666" stroke-width="2"/></svg><i class="sthumb"></i><svg class="sa" viewBox="0 0 8 10"><path d="M2 1l4 4-4 4" fill="none" stroke="#666" stroke-width="2"/></svg></div>
</div>
<div class="knobs">

<div class="pn"><div class="ph c-tr">Trigger</div>
<svg class="pb" viewBox="0 0 94 184">
<text class="sc-l" x="31" y="10.500" text-anchor="middle">Level</text>
<rect x="12.500" y="13.500" width="38" height="80" fill="#a8a8a8" stroke="#111"/><rect x="19" y="15" width="24" height="77" fill="url(#wheel)" stroke="#555"/>
<path d="M20.500 16V91M41.500 16V91" stroke="#222" stroke-width="3" stroke-dasharray="1 4"/>
<text class="sc-w" x="31" y="18.500" text-anchor="middle" clip-path="url(#wclip)">-20</text><text class="sc-w" x="31" y="37.500" text-anchor="middle">-10</text><text class="sc-w" x="31" y="57.500" text-anchor="middle">0</text><text class="sc-w" x="31" y="77.500" text-anchor="middle">10</text>
<polygon points="13,46 18,51 13,56" fill="#e00000"/><polygon points="50,46 45,51 50,56" fill="#e00000"/>
<path d="M7 40L10.500 46H3.500ZM7 62L10.500 56H3.500Z" fill="#f0a0b0"/><path d="M7 46V56" stroke="#f0a0b0"/>
<text class="sc-l" x="75" y="17" text-anchor="end">AC</text><text class="sc-l" x="75" y="31" text-anchor="end">DC</text>
<rect x="77.500" y="3.500" width="14" height="32" fill="#a8a8a8" stroke="#111"/><path d="M84.500 6V32" stroke="#111" stroke-width="2"/><use href="#thumb" x="79" y="19"/>
<rect x="77.500" y="47.500" width="14" height="32" fill="#a8a8a8" stroke="#111"/><path d="M84.500 50V77" stroke="#111" stroke-width="2"/><use href="#thumb" x="79" y="48.500"/>
<path d="M67 60H70.500V50H74M67 67H71V77H74" fill="none" stroke="#333"/>
<text class="sc-l" x="74" y="103.500" text-anchor="end">Auto</text><use href="#pbp" x="77" y="93"/>
<text class="sc-l" x="74" y="119.500" text-anchor="end">One-Shot</text><use href="#pb" x="77" y="109"/>
<text class="sc-l" x="74" y="135.500" text-anchor="end">Cursors</text><use href="#pb" x="77" y="125"/>
<text class="sc-l" x="46" y="155.500" text-anchor="middle">Source</text>
<text class="sc-b f-a" x="26" y="166.500" text-anchor="middle">A</text><text class="sc-b f-b" x="41" y="166.500" text-anchor="middle">B</text><text class="sc-b f-c" x="56" y="166.500" text-anchor="middle">C</text><text class="sc-b f-d" x="70" y="166.500" text-anchor="middle">D</text>
<rect x="15.500" y="168.500" width="63" height="14" fill="#a8a8a8" stroke="#111"/><path d="M20 175.500H73" stroke="#111" stroke-width="2"/><use href="#hthumb" x="16.500" y="169.500"/>
</svg></div>

<div class="pn"><div class="ph c-a">Channel A</div>
<svg class="pb" viewBox="0 0 93 184"><use href="#chstatic"/>
<text class="sc-w" x="30" y="33.500" text-anchor="middle">-10</text><text class="sc-w" x="30" y="53.500" text-anchor="middle">0</text><text class="sc-w" x="30" y="73.500" text-anchor="middle">10</text>
<path d="M5.500 40L9 46H2ZM5.500 62L9 56H2Z" fill="#ffe600"/><path d="M5.500 46V56" stroke="#ffe600"/>
<text class="sc-l" x="74" y="93.500" text-anchor="end">A+B</text><use href="#pb" x="76" y="83"/>
<use href="#vdial"/><use href="#val"/><text class="sc-v" x="32" y="179">0.1</text>
<polygon points="49.300,121 58.700,122.700 56,112" fill="#f0e000"/><polygon points="50.300,146.700 56,147.700 54.700,142" fill="#f0e000"/>
</svg></div>

<div class="pn"><div class="ph c-c">Channel C</div>
<svg class="pb" viewBox="0 0 93 184"><use href="#chstatic"/>
<text class="sc-w" x="30" y="33.500" text-anchor="middle">-50</text><text class="sc-w" x="30" y="53.500" text-anchor="middle">-40</text><text class="sc-w" x="30" y="73.500" text-anchor="middle">-30</text>
<path d="M5.500 40L9 46H2ZM5.500 62L9 56H2Z" fill="#d8107c"/><path d="M5.500 46V56" stroke="#d8107c"/>
<text class="sc-l" x="74" y="93.500" text-anchor="end">C+D</text><use href="#pb" x="76" y="83"/>
<use href="#vdial"/><use href="#val"/><text class="sc-v" x="32" y="179">5</text>
<polygon points="18.700,138.700 28,133.700 28,143.300" fill="#c00070"/><polygon points="50.700,145.300 56.300,142.700 56.300,148.300" fill="#c00070"/>
</svg></div>

<div class="pn"><div class="ph c-h">Horizontal</div>
<svg class="pb" viewBox="0 0 94 184">
<text class="sc-l" x="46" y="13" text-anchor="middle">Source</text>
<path d="M13 22H19L24 18" fill="none" stroke="#e07010"/>
<text class="sc-b f-a" x="33" y="22.500" text-anchor="middle">A</text><text class="sc-b f-b" x="47" y="22.500" text-anchor="middle">B</text><text class="sc-b f-c" x="61" y="22.500" text-anchor="middle">C</text><text class="sc-b f-d" x="76" y="22.500" text-anchor="middle">D</text>
<rect x="9.500" y="25.500" width="77" height="14" fill="#a8a8a8" stroke="#111"/><path d="M14 32.500H81" stroke="#111" stroke-width="2"/><use href="#hthumb" x="10.500" y="26.500"/>
<text class="sc-l" x="46" y="51.500" text-anchor="middle">Position</text>
<rect x="7.500" y="54.500" width="81" height="39" fill="#a8a8a8" stroke="#111"/><rect x="10" y="60" width="76" height="26" fill="url(#hwheel)" stroke="#555"/>
<text class="sc-w" x="15" y="76" text-anchor="end" clip-path="url(#hclip)">20</text><text class="sc-w" x="30" y="76" text-anchor="middle">210</text><text class="sc-w" x="50" y="76" text-anchor="middle">200</text><text class="sc-w" x="70" y="76" text-anchor="middle">190</text>
<path d="M11 84H85" stroke="#222" stroke-width="3" stroke-dasharray="1 4"/>
<polygon points="42,55 50,55 46,60" fill="#e00000"/><polygon points="42,93 50,93 46,88" fill="#e00000"/>
<use href="#dialbody" y="1"/>
<rect x="29.500" y="170.500" width="34" height="12" fill="#fff" stroke="#111"/>
<text class="sc-v" x="32" y="180">0.5m</text>
<text class="sc-s" x="41" y="102">0.5</text><text class="sc-s" x="54" y="102">0.2</text><text class="sc-s" x="63" y="106">0.1</text><text class="sc-s" x="31" y="106">1</text><text class="sc-s" x="23" y="112">2</text><text class="sc-s" x="15" y="119">5</text><text class="sc-s" x="10" y="129">10</text><text class="sc-s" x="9" y="139">20</text><text class="sc-s" x="9" y="151">50</text><text class="sc-s" x="10" y="161">100</text><text class="sc-s" x="20" y="170">200</text>
<text class="sc-s" x="73" y="113">50</text><text class="sc-s" x="80" y="120">20</text><text class="sc-s" x="84" y="129">10</text><text class="sc-s" x="86" y="140">5</text><text class="sc-s" x="86" y="151">2</text><text class="sc-s" x="83" y="163">1</text><text class="sc-s" x="75" y="170">0.5</text>
<text class="sc-u" x="15" y="180">ms</text><text class="sc-u" x="79" y="180">µs</text>
<polygon points="39.700,120.300 49.700,119.300 43.700,111.300" fill="#e07010"/><polygon points="51.300,147 57,147 54.300,142" fill="#e07010"/>
</svg></div>

<div class="pn"><div class="ph c-b">Channel B</div>
<svg class="pb" viewBox="0 0 93 184"><use href="#chstatic"/>
<text class="sc-w" x="30" y="33.500" text-anchor="middle">-10</text><text class="sc-w" x="30" y="53.500" text-anchor="middle">0</text><text class="sc-w" x="30" y="73.500" text-anchor="middle">10</text>
<path d="M5.500 40L9 46H2ZM5.500 62L9 56H2Z" fill="#0090e0"/><path d="M5.500 46V56" stroke="#0090e0"/>
<use href="#vdial"/><use href="#val"/><text class="sc-v" x="32" y="179">0.1</text>
<polygon points="49.300,121 58.700,122.700 56,112" fill="#0090e0"/><polygon points="50.300,146.700 56,147.700 54.700,142" fill="#0090e0"/>
</svg></div>

<div class="pn"><div class="ph c-d">Channel D</div>
<svg class="pb" viewBox="0 0 93 184"><use href="#chstatic"/>
<text class="sc-w" x="30" y="33.500" text-anchor="middle">-130</text><text class="sc-w" x="30" y="53.500" text-anchor="middle">-120</text><text class="sc-w" x="30" y="73.500" text-anchor="middle">-110</text>
<path d="M5.500 40L9 46H2ZM5.500 62L9 56H2Z" fill="#008a40"/><path d="M5.500 46V56" stroke="#008a40"/>
<use href="#vdial"/><use href="#val"/><text class="sc-v" x="32" y="179">5</text>
<polygon points="18.700,138.700 28,133.700 28,143.300" fill="#008a40"/><polygon points="50.700,145.300 56.300,142.700 56.300,148.300" fill="#008a40"/>
</svg></div>

</div>
</div>
</div>
</section>
</main>

<div class="statusbar">
<div class="sgroup s1"><i class="grip"></i>
<svg class="st" viewBox="0 0 14 16"><path d="M3 1l9 7-9 7z" fill="#00a800"/></svg>
<svg class="st" viewBox="0 0 14 16"><path d="M1 1h2.500v14H1zM6 1l8 7-8 7z" fill="#1060c8"/></svg>
<svg class="st" viewBox="0 0 14 16"><path d="M3 1h3v14H3zM8 1h3v14H8z" fill="#1060c8"/></svg>
<svg class="st" viewBox="0 0 14 16"><rect x="0" y="1" width="14" height="14" fill="#0a60c8" stroke="#083c90"/></svg>
<i class="sep"></i>
<svg class="warn" viewBox="0 0 16 15"><path d="M8 0l8 14.500H0z" fill="#ffd800" stroke="#b89000" stroke-width=".5"/><path d="M7 4h2l-.4 6H7.400zM7 11h2v2H7z" fill="#000"/></svg>
<span class="msg">4 Message(s)</span>
</div>
<div class="sgroup s2"><i class="grip"></i><span class="anim">ANIMATING: 00:00:29.272028 (CPU load 65%)</span></div>
</div>

<footer class="taskbar">
<span class="start"><svg viewBox="0 0 18 16" width="17" height="16"><path d="M0 2.200L7.500 1V7.600H0zM8.500 .9L18 0V7.600H8.500zM0 8.500H7.500V15L0 13.900zM8.500 8.500H18V16L8.500 15.100z" fill="#000"/></svg></span>
<label class="search"><svg viewBox="0 0 18 18" width="17" height="17"><circle cx="11" cy="7" r="5.500" fill="none" stroke="#222" stroke-width="1.300"/><path d="M7 11l-6 6" stroke="#222" stroke-width="1.300"/></svg><span>Type here to search</span></label>
<span class="tbi"><svg viewBox="0 0 16 16" width="16" height="16"><circle cx="8" cy="8" r="6.500" fill="none" stroke="#111" stroke-width="2"/></svg></span>
<span class="tbi"><svg viewBox="0 0 18 16" width="18" height="16"><path d="M1 4h12v8H1zM1 1h12M1 15h12" fill="none" stroke="#111" stroke-width="1.100"/><path d="M16 2v3" stroke="#111" stroke-width="1.200"/><rect x="15" y="6" width="2.500" height="3.500" fill="#111"/><path d="M16 11v3" stroke="#111" stroke-width="1.200"/></svg></span>
<span class="tbi m3"><svg viewBox="0 0 24 24" width="24" height="24"><circle cx="12" cy="12" r="11.500" fill="url(#edge)"/><path d="M23 13c0-7-5-11-11-11C6 2 2 6 1 11c3-4 9-5 12-2 2 2 0 4-1 5 4 0 11-1 11-1z" fill="#63d24a" opacity=".85"/><circle cx="14" cy="13" r="4" fill="#fff"/><path d="M17 10a5 5 0 0 0-8 4c0 3 3 5 6 5" fill="none" stroke="#1f78c8" stroke-width="3"/></svg></span>
<span class="tbi"><svg viewBox="0 0 24 20" width="22" height="18"><path d="M0 1h9l2 2h13v17H0z" fill="#e0a928"/><path d="M0 5h24v15H0z" fill="#ffd766"/><path d="M8 20v-7h8v7h-3v-3h-2v3z" fill="#2a8ee0"/></svg></span>
<span class="tbi m2"><svg viewBox="0 0 24 24" width="23" height="23"><circle cx="12" cy="12" r="11.500" fill="#db4437"/><path d="M12 12L1.600 7A11.500 11.500 0 0 0 12 23.500L17 14z" fill="#0f9d58"/><path d="M12 7h10.300A11.500 11.500 0 0 1 12 23.500L17 14z" fill="#ffcd40"/><circle cx="12" cy="12" r="5.400" fill="#fff"/><circle cx="12" cy="12" r="4.200" fill="#4285f4"/></svg></span>
<span class="tbi active"><svg viewBox="0 0 24 24" width="24" height="24"><path d="M3 3l18 18M21 3L3 21" stroke="#e0b070" stroke-width="1.200"/><ellipse cx="12" cy="12" rx="11" ry="4.500" fill="none" stroke="#e0b070"/><circle cx="12" cy="12" r="6.500" fill="#4a6a98"/><path d="M6 10c4-3 8-2 11 0-3 3-7 3-11 0z" fill="#c4ccd4"/></svg></span>
<div class="tray">
<span class="tr w46"><svg viewBox="0 0 24 16" width="24" height="16"><path d="M1 1h20v14H1z" fill="none" stroke="#111" stroke-width="1.300"/><path d="M21 3h2v12h-2" fill="none" stroke="#111"/><path d="M3 3.500h16M4 7h6v5H4zM12 7h6M12 9.500h6M12 12h6" fill="none" stroke="#111"/></svg></span>
<span class="tr"><svg viewBox="0 0 12 7" width="12" height="7"><path d="M.5 6.500L6 1l5.500 5.500" fill="none" stroke="#111"/></svg></span>
<span class="tr"><svg viewBox="0 0 12 16" width="12" height="16"><rect x="1" y="3" width="7" height="10" rx="3" fill="none" stroke="#222"/><path d="M8 7l3-2v6L8 9" fill="none" stroke="#222"/><path d="M2 1h5M2 15h5" stroke="#777"/></svg></span>
<span class="tr"><svg viewBox="0 0 16 9" width="15" height="9"><rect x=".5" y=".5" width="13" height="8" fill="none" stroke="#111"/><rect x="2" y="2" width="7" height="5" fill="#111"/><rect x="14" y="3" width="2" height="3" fill="#111"/></svg></span>
<span class="tr"><svg viewBox="0 0 17 17" width="17" height="17"><circle cx="8" cy="8" r="7.200" fill="none" stroke="#222"/><ellipse cx="8" cy="8" rx="3.500" ry="7.200" fill="none" stroke="#222"/><path d="M1 8h14M2 4.500h12M2 11.500h12" stroke="#222"/><circle cx="13" cy="13" r="3.500" fill="#e0e0e0" stroke="#222"/><path d="M11 11l4 4" stroke="#222"/></svg></span>
<span class="tr"><svg viewBox="0 0 17 14" width="17" height="14"><path d="M1 4.500h3L8 1v12L4 9.500H1z" fill="none" stroke="#222"/><path d="M10 4.500c1 1.500 1 3.500 0 5M12.500 2.500c2 3 2 6 0 9M15 1c2.500 4 2.500 8 0 12" fill="none" stroke="#222"/></svg></span>
<span class="tr eng">ENG</span>
<span class="clock"><span>09:56</span><span>05-09-2022</span></span>
<span class="tr notif"><svg viewBox="0 0 16 14" width="16" height="14"><path d="M0 0h16v10H7l-3 4v-4H0z" fill="#000"/><path d="M3 3h10M3 6h10" stroke="#ddd"/></svg><b class="badge">1</b></span>
</div>
</footer>
</body>
</html>
```
FILE: styles.css
```css
* { box-sizing: border-box; }
html, body { margin: 0; padding: 0; }
body { width: 1366px; height: 768px; overflow: hidden; display: flex; flex-direction: column; background: #e3ecf3; font-family: "Noto Sans", "Liberation Sans", sans-serif; color: #000; position: relative; }
.defs { position: absolute; }
i { display: block; font-style: normal; }

.titlebar { height: 22px; background: #fff; display: flex; align-items: center; flex: none; }
.appicon { width: 16px; height: 16px; margin-left: 3px; flex: none; }
.titletext { margin-left: 4px; font-size: 12.400px; letter-spacing: -.08px; color: #111; white-space: nowrap; }
.winbtns { margin-left: auto; display: flex; margin-right: 2px; }
.wb { width: 46px; height: 22px; display: flex; align-items: center; justify-content: center; }

.menubar { height: 19px; background: #fff; display: flex; gap: 14.100px; padding-left: 7px; align-items: center; font-size: 11.100px; flex: none; color: #111; }

.toolbar { height: 29px; flex: none; display: flex; align-items: flex-end; background: linear-gradient(#dbe8f2, #e3ecf3 3px); }
.tg { height: 26px; display: flex; align-items: center; background: linear-gradient(#e6f1f8, #b0d3e9); padding-left: 10px; position: relative; flex: none; }
.g1 { width: 303px; margin-right: 4px; }
.g2 { width: 197px; margin-right: 5px; }
.g3 { width: 310px; margin-right: 5px; }
.g4 { width: 185px; }
.g1 .sep { width: 9px; }
.tg .grip { left: 3px; }
.grip { position: absolute; top: 2px; bottom: 2px; width: 2px; background: repeating-linear-gradient(#9fb4c4 0 1px, #fff 1px 2px, transparent 2px 3px); }
.ic { width: 21px; height: 20px; padding: 1px 2px; flex: none; }
.ic.on { background: #c8e2f2; outline: 1px solid #6b9bbd; outline-offset: -1px; height: 22px; padding: 2px; }
.sep { width: 8px; height: 22px; flex: none; background: linear-gradient(#8fa9bb, #8fa9bb) center / 1px 100% no-repeat; }

.tabrow { height: 26px; flex: none; padding-left: 0; background: #e3ecf3; }
.tab { width: 180px; height: 26px; position: relative; display: flex; align-items: center; padding-top: 4px; }
.tabshape { position: absolute; inset: 0; width: 180px; height: 26px; }
.tabicon { position: relative; width: 16px; height: 13px; margin-left: 20px; flex: none; }
.tablabel { position: relative; margin-left: 6px; font-size: 11.600px; font-weight: 700; letter-spacing: -.1px; color: #2b4a68; white-space: nowrap; }
.tabx { position: relative; width: 8px; height: 8px; margin-left: 11px; flex: none; }
.tabstrip { height: 7px; flex: none; background: linear-gradient(#b9d8eb, #a9cfe6); border-top: 1px solid #7aa3c2; }

.workspace { height: 598px; flex: none; display: flex; position: relative; }
.tools { width: 27px; height: 505px; flex: none; background: linear-gradient(90deg, #e8f2f8, #a9d0e8); display: flex; flex-direction: column; align-items: center; padding-right: 3px; position: relative; }
.tools2 { width: 29px; height: 127px; flex: none; background: linear-gradient(90deg, #e3ecf3, #b6d6ea); display: flex; flex-direction: column; align-items: center; padding-right: 2px; position: relative; }
.gripx { height: 10px; width: 100%; flex: none; background: repeating-linear-gradient(90deg, #fff 0 1px, #a9bac8 1px 2px, transparent 2px 3px) 0 0 / 100% 2px no-repeat; }
.tools2 .gripx { height: 11px; }
.tic { width: 24px; height: 22px; padding: 2px 3px; flex: none; }
.tic.on { background: #bcd8ea; outline: 1px solid #6b9bbd; outline-offset: -1px; padding: 1px 2px; }
.hr { width: 22px; height: 4px; flex: none; background: linear-gradient(#fff, #fff) center / 100% 1px no-repeat; }
.angle { width: 22px; height: 15px; margin-top: 2px; background: #fff; font-size: 11px; line-height: 15px; padding-left: 1px; flex: none; font-family: "Liberation Sans", sans-serif; }
.tools2 .hr { margin: 3px 0 1px; }

.side { width: 121px; flex: none; display: flex; flex-direction: column; height: 598px; }
.overview { height: 101px; flex: none; background: #e0e0d0; border: 2px solid #808080; border-left-width: 1px; }
.ov { display: block; width: 100%; height: 100%; }
.genhead { margin-top: 4px; height: 24px; flex: none; text-align: center; font: 10.800px/25px "Liberation Sans", sans-serif; background: linear-gradient(#e8f2f8, #b3d5ea); border: 1px solid #9db8ca; border-bottom: 0; color: #111; }
.genlist { list-style: none; margin: 0; padding: 0 0 0 1px; flex: 1; background: #fff; border: 2px solid #6b6b6b; font: 10.900px/12.920px "Liberation Sans", sans-serif; color: #111; }
.genlist li { padding-left: 1px; height: 12.920px; }
.genlist .sel { background: #0078d7; color: #fff; }

.canvas { width: 1181px; height: 597px; flex: none; margin-left: 4px; border: 1px solid #8b8b8b; position: relative; background-color: #e0e0d0;
  background-image:
    linear-gradient(90deg, #bdbdad 2px, transparent 2px),
    linear-gradient(#bdbdad 2px, transparent 2px),
    linear-gradient(90deg, #c4c4b4 1px, transparent 1px),
    linear-gradient(90deg, #c4c4b4 1px, transparent 1px),
    linear-gradient(#c4c4b4 1px, transparent 1px),
    linear-gradient(#c4c4b4 1px, transparent 1px);
  background-size: 135px 100%, 100% 135px, 27px 100%, 27px 100%, 100% 27px, 100% 27px;
  background-position: 102px 0, 0 80px, 22px 0, 9px 0, 0 0, 0 14px;
}
.schem { display: block; width: 1180px; height: 595px; }
.wire path { fill: none; stroke: #004000; stroke-width: 2; }
.node rect { fill: #004000; }
.navy { fill: none; stroke: #000080; stroke-width: 1; }
.part path, .part rect, .part ellipse { fill: none; stroke: #800000; stroke-width: 2; }
.part .body { fill: #c8c8a8; }
.part .thick { stroke-width: 2.400; }
.part .thin { stroke-width: 1; }
.disp { font: 10.500px "Liberation Sans", sans-serif; fill: #00ff00; }
.volts { font: italic 9px "Liberation Sans", sans-serif; fill: #802020; }
.ref { font: 15px "Liberation Sans", sans-serif; fill: #222; }
.val { font: 10.500px "Liberation Sans", sans-serif; fill: #333; }
.probe path { fill: none; stroke: #0000d0; stroke-width: 1; }
.probe text { font: 700 10px "Liberation Sans", sans-serif; fill: #1818d8; }
.cross circle, .cross path { fill: none; stroke: #0000d0; stroke-width: 1; }

.scopewin { position: absolute; left: 309px; top: 148px; width: 689px; height: 448px; background: #f0f0f0; box-shadow: 0 0 9px rgba(0, 0, 0, .45); display: flex; flex-direction: column; }
.scopetitle { height: 25px; flex: none; background: #fff; display: flex; align-items: center; justify-content: space-between; padding-left: 3px; font-size: 11.200px; color: #111; }
.scopeclose { width: 18px; height: 18px; margin: -4px 1px 0 0; background: #c75050; color: #fff; font: 700 11px/17px "Liberation Sans", sans-serif; text-align: center; }
.scopebody { flex: 1; display: flex; background: #111; }
.scopeleft { width: 407px; flex: none; display: flex; flex-direction: column; background: #c8c8c8; padding: 2px 1px 0 2px; }
.screen { display: block; width: 403px; height: 402px; flex: none; }
.grid { fill: none; stroke: #0a4a0a; stroke-width: 1; }
.blue { fill: none; stroke: #0096e6; stroke-width: 1.300; transform: translate(.5px, 0); }
.yellow { fill: none; stroke: #fff200; stroke-width: 1.300; transform: translate(.5px, 0); }
.cursor { fill: none; stroke: #8a8a8a; stroke-width: 1; stroke-dasharray: 3 2; }
.redline { fill: none; stroke: #e05a70; stroke-width: 1; }
.greenline { fill: none; stroke: #00e000; stroke-width: 1; }
.scopescroll { margin: 2px -1px 0 -2px; height: 17px; background: #efefef; border-top: 1px solid #000; border-bottom: 1px solid #000; display: flex; align-items: center; padding: 0 4px 0 6px; flex: none; }
.sa { width: 8px; height: 10px; flex: none; }
.sthumb { width: 17px; height: 15px; background: #cdcdcd; margin-left: auto; margin-right: 11px; }

.knobs { flex: none; width: 282px; display: grid; grid-template-columns: 94px 93px 93px; grid-template-rows: 211px 210px; gap: 1px; background: #222; }
.pn { background: #a8a8a8; display: flex; flex-direction: column; }
.ph { height: 26px; flex: none; border-bottom: 1px solid #555; text-align: center; font: 700 12.300px/30px "Liberation Sans", sans-serif; overflow: hidden; }
.pb { display: block; width: 100%; height: 184px; flex: none; }
.c-tr { color: #f0a4b0; } .c-a { color: #ffff00; } .c-c { color: #e8107c; } .c-h { color: #e87820; } .c-b { color: #0090e0; } .c-d { color: #00a050; }
.f-a { fill: #ffff00; } .f-b { fill: #0090e0; } .f-c { fill: #e8107c; } .f-d { fill: #00a050; }
.sc-l { font: 9.200px "Liberation Sans", sans-serif; fill: #333; }
.sc-s { font: 8px "Liberation Sans", sans-serif; fill: #333; text-anchor: middle; }
.sc-u { font: 10px "Liberation Sans", sans-serif; fill: #333; text-anchor: middle; }
.sc-w { font: 10px "Liberation Sans", sans-serif; fill: #1a2440; }
.sc-v { font: 10px "Liberation Sans", sans-serif; fill: #3050c0; }
.sc-b { font: 700 9px "Liberation Sans", sans-serif; }

.statusbar { height: 27px; flex: none; display: flex; background: linear-gradient(#e4eef6, #a9cfe7); }
.sgroup { height: 27px; display: flex; align-items: center; position: relative; flex: none; }
.s1 { width: 262px; padding-left: 22px; border-right: 3px solid #cfdbe4; }
.s2 { width: 419px; margin-left: 2px; padding-left: 12px; border-right: 3px solid #cfdbe4; }
.sgroup .grip { left: 4px; }
.st { width: 14px; height: 16px; margin-right: 22px; flex: none; }
.warn { width: 16px; height: 15px; margin-left: 8px; flex: none; }
.msg { margin-left: 5px; font-size: 10.800px; color: #222; white-space: nowrap; letter-spacing: -.1px; }
.anim { font-size: 10.600px; color: #0c5c28; white-space: nowrap; }
.statusbar .sep { margin-left: -12px; }

.taskbar { height: 40px; flex: none; background: #dedede; display: flex; align-items: center; }
.start { width: 49px; display: flex; justify-content: center; flex: none; }
.search { width: 343px; height: 39px; background: #fff; border: 1px solid #c6c6c6; display: flex; align-items: center; padding-left: 11px; flex: none; font-size: 14px; color: #333; gap: 10px; }
.tbi { width: 48px; height: 40px; display: flex; align-items: center; justify-content: center; flex: none; }
.m3 { margin-left: 3px; } .m2 { margin-left: 2px; }
.tbi.active { background: #f1f1f1; border-bottom: 3px solid #0078d7; margin-left: 1px; padding-top: 2px; }
.tray { margin-left: auto; display: flex; align-items: center; width: 326px; flex: none; height: 40px; }
.tr { width: 24px; display: flex; justify-content: center; align-items: center; flex: none; }
.w46 { width: 46px; margin-right: 1px; }
.eng { width: 34px; font-size: 11.800px; color: #222; }
.clock { width: 72px; flex: none; display: flex; flex-direction: column; align-items: center; font-size: 11.800px; line-height: 18px; color: #222; }
.notif { width: 40px; position: relative; }
.badge { position: absolute; left: 22px; top: 2px; width: 16px; height: 16px; border-radius: 50%; background: #dedede; border: 1px solid #777; font: 700 10px/14px "Noto Sans", sans-serif; text-align: center; color: #444; }
```
